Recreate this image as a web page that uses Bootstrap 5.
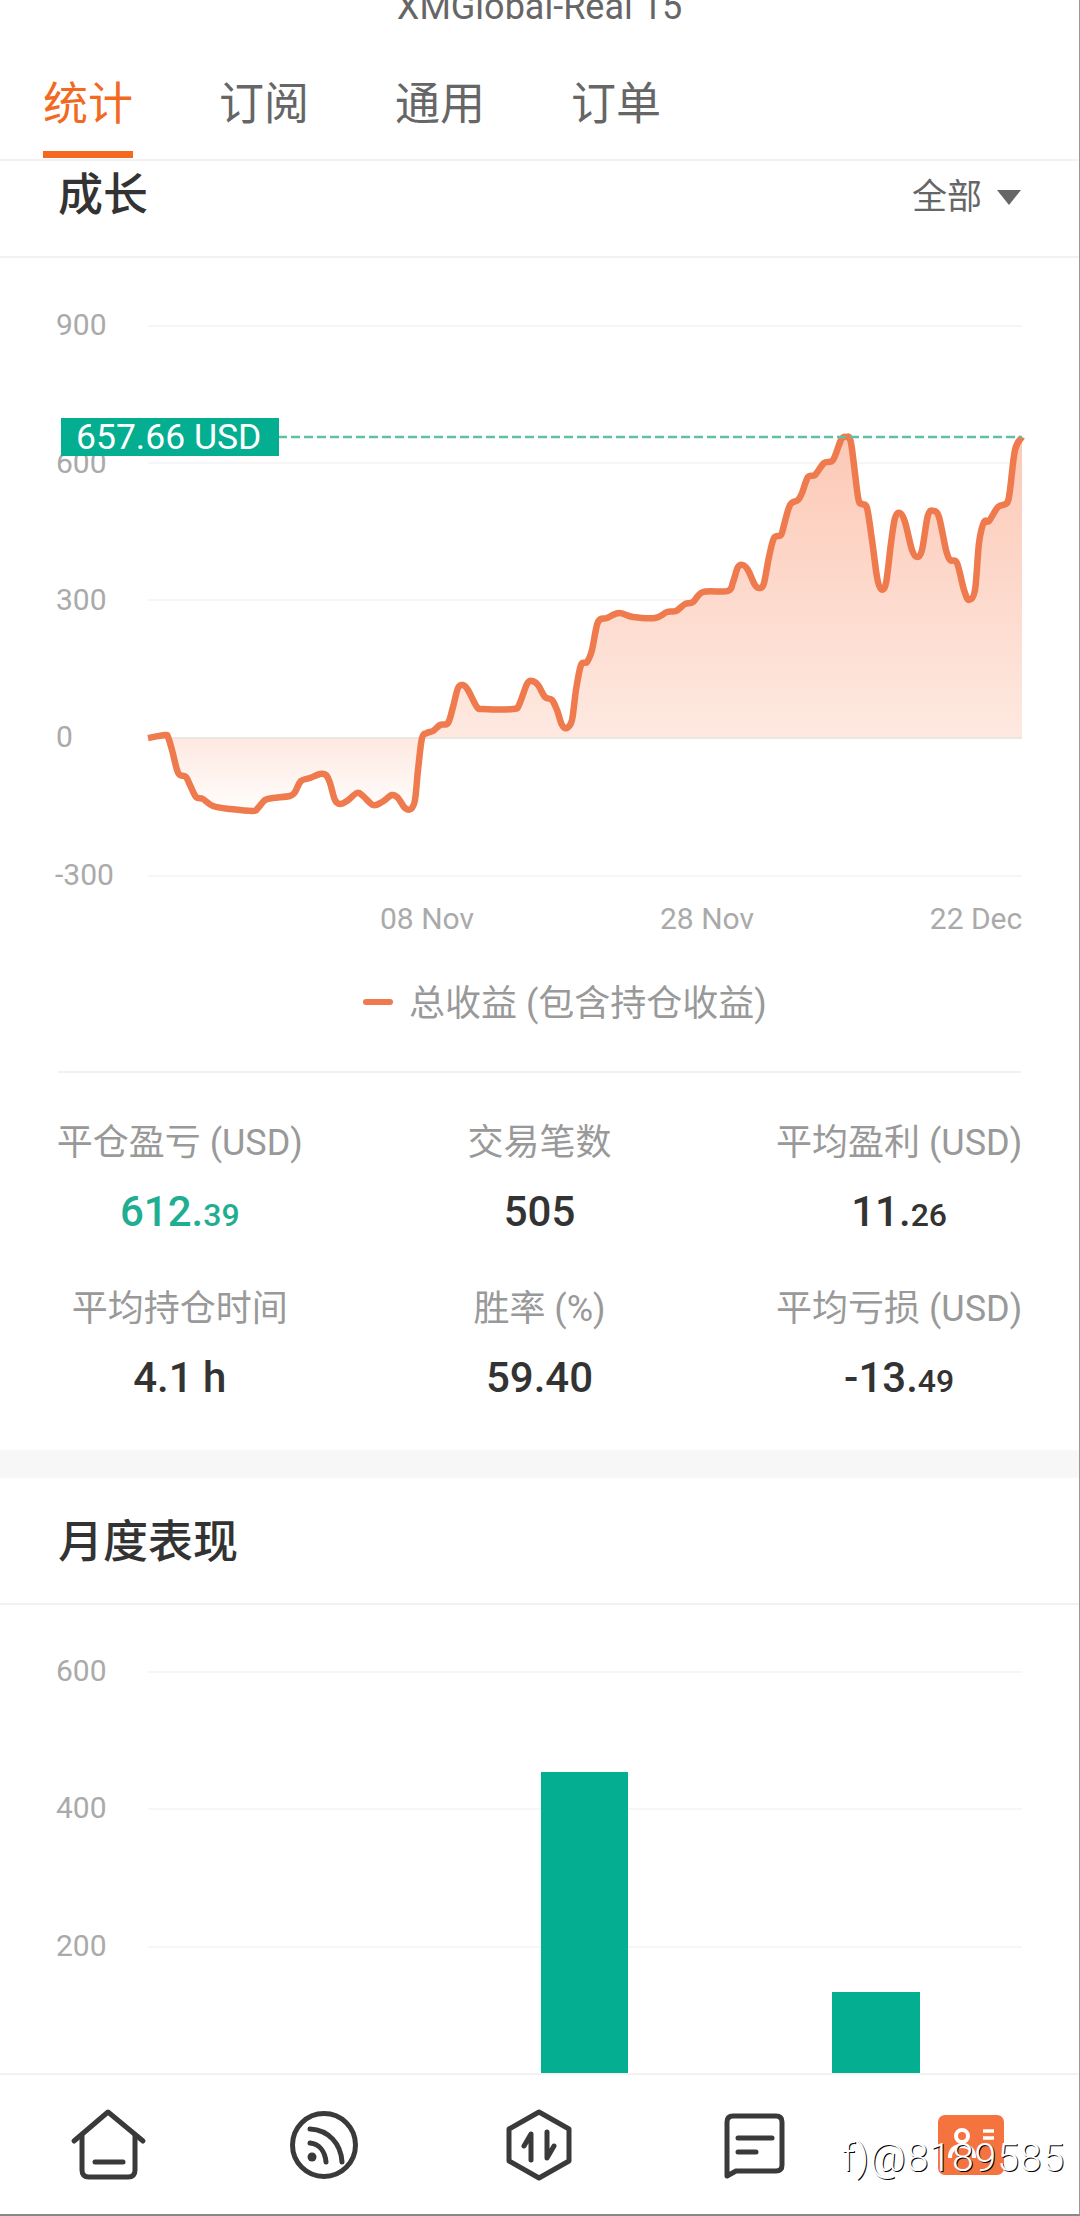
<!DOCTYPE html>
<html lang="zh-CN">
<head>
    <meta charset="UTF-8">
    <title>XMGlobal-Real 15</title>
    <link href="https://cdn.jsdelivr.net/npm/bootstrap@5.3.0/dist/css/bootstrap.min.css" rel="stylesheet">
    <style>
        html, body {
            margin: 0;
            background: #fff;
        }
        body, svg text {
            font-family: Roboto, "Noto Sans CJK SC", sans-serif;
        }
        .screen {
            position: relative;
            width: 1080px;
            height: 2216px;
            overflow: hidden;
            background: #fff;
            border-right: 1px solid #999;
            border-bottom: 2px solid #888;
            box-sizing: border-box;
        }
        .screen > * {
            flex-shrink: 0;
        }
        .top-title {
            height: 26px;
            margin-top: -6px;
            line-height: 26px;
            font-size: 36px;
            color: #666;
        }
        .tab-bar {
            gap: 86px;
            padding: 0 0 1px 43px;
            border-bottom: 2px solid #f2f2f2;
        }
        .tab-item {
            height: 138px;
            padding-top: 55px;
            padding-bottom: 16px;
            line-height: 60px;
            font-size: 45px;
            color: #666;
            border-bottom: 7px solid transparent;
        }
        .tab-item.on {
            color: #f2691f;
            border-bottom-color: #f2691f;
        }
        .sec-head {
            padding: 0 58px;
            border-bottom: 2px solid #f2f2f2;
        }
        .sec-title {
            height: 60px;
            line-height: 60px;
            font-size: 45px;
            font-weight: 500;
            color: #333;
        }
        .head-growth {
            height: 97px;
            padding-top: 5px;
        }
        .head-month {
            height: 127px;
            padding-top: 35px;
        }
        .range-pick {
            gap: 15px;
            height: 60px;
            padding-top: 3px;
            line-height: 60px;
            font-size: 35px;
            color: #666;
        }
        .caret-down {
            width: 0;
            height: 0;
            border-left: 12px solid transparent;
            border-right: 12px solid transparent;
            border-top: 15px solid #666;
        }
        .chart-svg {
            display: block;
        }
        .axis-txt {
            font-size: 30px;
            fill: #aaa;
        }
        .legend-txt {
            font-size: 36px;
            fill: #999;
        }
        .badge-txt {
            font-size: 35.5px;
            fill: #fff;
        }
        .stats-rule {
            height: 2px;
            margin: 0 58px;
            background: #f2f2f2;
        }
        .stats-wrap {
            height: 377px;
            padding-top: 45px;
            row-gap: 47px;
            align-content: flex-start;
        }
        .stat-label {
            height: 50px;
            line-height: 50px;
            font-size: 36px;
            color: #999;
        }
        .stat-value {
            height: 50px;
            margin-top: 19px;
            line-height: 50px;
            font-size: 42px;
            font-weight: 500;
            color: #333;
        }
        .stat-value span {
            font-size: 32px;
        }
        .stat-value.up {
            color: #1fae92;
        }
        .gap-band {
            height: 28px;
            background: #f7f7f7;
        }
        .chart-clip {
            height: 468px;
            overflow: hidden;
        }
        .foot-bar {
            height: 141px;
            padding-top: 30px;
            border-top: 2px solid #f2f2f2;
            background: #fff;
        }
        .foot-cell {
            width: 216px;
        }
        .wm-text {
            position: absolute;
            left: 842px;
            top: 2133px;
            font-size: 39px;
            font-weight: 300;
            line-height: 50px;
            letter-spacing: 1px;
            color: #fff;
            text-shadow: 1px 1px 0 #000;
        }
    </style>
</head>
<body>

<div class="screen d-flex flex-column">
    <div class="top-title text-center">XMGlobal-Real 15</div>

    <div class="tab-bar d-flex">
        <div class="tab-item on">统计</div>
        <div class="tab-item">订阅</div>
        <div class="tab-item">通用</div>
        <div class="tab-item">订单</div>
    </div>

    <div class="sec-head head-growth d-flex justify-content-between align-items-start">
        <div class="sec-title">成长</div>
        <div class="range-pick d-flex align-items-center">全部<span class="caret-down"></span></div>
    </div>

    <svg class="chart-svg" width="1080" height="813" viewBox="0 258 1080 813">
        <defs>
            <linearGradient id="areaFill" gradientUnits="userSpaceOnUse" x1="0" y1="437" x2="0" y2="815">
                <stop offset="0" stop-color="#fcc9b6"/>
                <stop offset="0.8" stop-color="#fee9e1"/>
                <stop offset="1" stop-color="#ffffff"/>
            </linearGradient>
        </defs>
        <g stroke="#f6f6f6" stroke-width="2">
            <line x1="148" x2="1022" y1="326" y2="326"/>
            <line x1="148" x2="1022" y1="463" y2="463"/>
            <line x1="148" x2="1022" y1="600" y2="600"/>
            <line x1="148" x2="1022" y1="876" y2="876"/>
        </g>
        <text class="axis-txt" x="56" y="335">900</text>
        <text class="axis-txt" x="56" y="473">600</text>
        <text class="axis-txt" x="56" y="610">300</text>
        <text class="axis-txt" x="56" y="747">0</text>
        <text class="axis-txt" x="55" y="885">-300</text>
        <path id="growthArea" fill="url(#areaFill)"/>
        <line x1="148" x2="1022" y1="738" y2="738" stroke="#ece6e3" stroke-width="2"/>
        <path id="growthLine" fill="none" stroke="#ee7a4d" stroke-width="6.5" stroke-linejoin="round"/>
        <line x1="278" x2="1022" y1="437" y2="437" stroke="#5fbfa9" stroke-width="2.5" stroke-dasharray="9 4"/>
        <rect x="61" y="418" width="218" height="38" fill="#04ae90"/>
        <text class="badge-txt" x="76" y="449">657.66 USD</text>
        <text class="axis-txt" x="427" y="929" text-anchor="middle">08 Nov</text>
        <text class="axis-txt" x="707" y="929" text-anchor="middle">28 Nov</text>
        <text class="axis-txt" x="976" y="929" text-anchor="middle">22 Dec</text>
        <line x1="366" x2="390" y1="1002" y2="1002" stroke="#ee7a4d" stroke-width="6" stroke-linecap="round"/>
        <text class="legend-txt" x="409" y="1016">总收益 (包含持仓收益)</text>
    </svg>

    <div class="stats-rule"></div>
    <div class="row g-0 stats-wrap text-center">
        <div class="col-4"><div class="stat-label">平仓盈亏 (USD)</div><div class="stat-value up">612.<span>39</span></div></div>
        <div class="col-4"><div class="stat-label">交易笔数</div><div class="stat-value">505</div></div>
        <div class="col-4"><div class="stat-label">平均盈利 (USD)</div><div class="stat-value">11.<span>26</span></div></div>
        <div class="col-4"><div class="stat-label">平均持仓时间</div><div class="stat-value">4.1 h</div></div>
        <div class="col-4"><div class="stat-label">胜率 (%)</div><div class="stat-value">59.40</div></div>
        <div class="col-4"><div class="stat-label">平均亏损 (USD)</div><div class="stat-value">-13.<span>49</span></div></div>
    </div>

    <div class="gap-band"></div>

    <div class="sec-head head-month">
        <div class="sec-title">月度表现</div>
    </div>

    <div class="chart-clip">
        <svg class="chart-svg" width="1080" height="468" viewBox="0 1605 1080 468">
            <g stroke="#f6f6f6" stroke-width="2">
                <line x1="148" x2="1022" y1="1672" y2="1672"/>
                <line x1="148" x2="1022" y1="1809" y2="1809"/>
                <line x1="148" x2="1022" y1="1947" y2="1947"/>
            </g>
            <text class="axis-txt" x="56" y="1681">600</text>
            <text class="axis-txt" x="56" y="1818">400</text>
            <text class="axis-txt" x="56" y="1956">200</text>
            <text class="axis-txt" x="56" y="2094">0</text>
            <rect x="541" y="1772" width="87" height="320" fill="#04ae90"/>
            <rect x="832" y="1992" width="88" height="100" fill="#04ae90"/>
        </svg>
    </div>

    <div class="foot-bar d-flex">
        <div class="foot-cell d-flex justify-content-center">
            <svg width="80" height="80" viewBox="67 2105 80 80" fill="none" stroke="#3a3a3a" stroke-width="5" stroke-linecap="round" stroke-linejoin="round">
                <path d="M73 2141 L107 2112 L142 2141"/>
                <path d="M81 2136 V2170 Q81 2177 88 2177 H127 Q134 2177 134 2170 V2136"/>
                <path d="M94 2162 H122"/>
            </svg>
        </div>
        <div class="foot-cell d-flex justify-content-center">
            <svg width="80" height="80" viewBox="283 2105 80 80" fill="none" stroke="#3a3a3a" stroke-width="5" stroke-linecap="round">
                <circle cx="323" cy="2145" r="31.5"/>
                <path d="M309 2129 C328 2130 340 2144 341 2162"/>
                <path d="M309 2143 C318 2144 324 2151 325 2162"/>
                <circle cx="311" cy="2157" r="4.5" fill="#3a3a3a" stroke="none"/>
            </svg>
        </div>
        <div class="foot-cell d-flex justify-content-center">
            <svg width="80" height="80" viewBox="500 2105 80 80" fill="none" stroke="#3a3a3a" stroke-width="5" stroke-linecap="round" stroke-linejoin="round">
                <path d="M540 2112 L570 2129 V2161 L540 2178 L510 2161 V2129 Z"/>
                <path d="M532 2160 V2134 L525 2146"/>
                <path d="M548 2132 V2158 L555 2146"/>
            </svg>
        </div>
        <div class="foot-cell d-flex justify-content-center">
            <svg width="80" height="80" viewBox="716 2105 80 80" fill="none" stroke="#3a3a3a" stroke-width="5" stroke-linecap="round" stroke-linejoin="round">
                <path d="M728 2176 V2122 Q728 2116 734 2116 H777 Q783 2116 783 2122 V2165 Q783 2171 777 2171 H737 Z"/>
                <path d="M739 2138 H773"/>
                <path d="M739 2152 H757"/>
            </svg>
        </div>
        <div class="foot-cell d-flex justify-content-center">
            <svg width="80" height="80" viewBox="931 2105 80 80">
                <rect x="938" y="2115" width="66" height="60" rx="7" fill="#f4733f"/>
                <circle cx="962" cy="2136" r="6" fill="none" stroke="#fff" stroke-width="4"/>
                <path d="M950 2158 Q950 2146 962 2146 Q974 2146 974 2158" fill="none" stroke="#fff" stroke-width="4"/>
                <path d="M983 2131 H994 M983 2138 H994" stroke="#fff" stroke-width="3.5"/>
            </svg>
        </div>
    </div>

    <div class="wm-text">f)@8189585</div>
</div>

<script src="https://cdn.jsdelivr.net/npm/bootstrap@5.3.0/dist/js/bootstrap.bundle.min.js"></script>
<script>
    // equity curve, read off the reference in page pixels
    var pts = [[148,738],[165,735],[168,737],[172,750],[177,770],[180,775],[186,777],[190,785],[196,797],[203,799],[213,806],[230,809],[253,811],[258,808],[265,800],[273,798],[290,796],[295,792],[301,781],[310,778],[320,774],[326,775],[330,783],[335,800],[340,804],[347,801],[357,793],[363,796],[373,805],[382,802],[392,795],[398,798],[405,808],[411,809],[415,800],[418,770],[422,738],[427,733],[433,731],[440,725],[448,723],[453,707],[458,688],[463,685],[468,690],[477,707],[483,709],[513,709],[519,705],[527,684],[532,681],[538,685],[545,697],[552,700],[557,710],[562,725],[567,728],[572,720],[576,690],[581,665],[587,662],[592,650],[598,622],[607,618],[619,613],[633,617],[655,618],[667,612],[676,611],[685,604],[693,602],[703,592],[728,591],[733,582],[738,567],[743,565],[748,570],[755,585],[760,588],[764,583],[769,557],[774,538],[781,535],[784,525],[790,505],[798,500],[802,493],[808,477],[815,475],[824,463],[833,460],[841,440],[846,437],[851,443],[858,497],[862,504],[867,508],[872,540],[877,577],[881,589],[886,583],[891,543],[895,518],[900,513],[905,522],[912,550],[917,557],[922,550],[928,515],[934,511],[939,517],[946,550],[950,560],[957,563],[964,590],[969,600],[975,590],[979,543],[984,522],[989,521],[998,507],[1007,503],[1010,490],[1015,450],[1022,437]];

    function smoothPath(p) {
        var d = "M" + p[0][0] + " " + p[0][1];
        for (var i = 0; i < p.length - 1; i++) {
            var a = p[Math.max(i - 1, 0)], b = p[i], c = p[i + 1], e = p[Math.min(i + 2, p.length - 1)];
            d += " C" + (b[0] + (c[0] - a[0]) / 6).toFixed(1) + " " + (b[1] + (c[1] - a[1]) / 6).toFixed(1) +
                 " " + (c[0] - (e[0] - b[0]) / 6).toFixed(1) + " " + (c[1] - (e[1] - b[1]) / 6).toFixed(1) +
                 " " + c[0] + " " + c[1];
        }
        return d;
    }

    var line = smoothPath(pts);
    document.getElementById("growthLine").setAttribute("d", line);
    document.getElementById("growthArea").setAttribute("d", line + " L1022 738 L148 738 Z");
</script>

</body>
</html>
